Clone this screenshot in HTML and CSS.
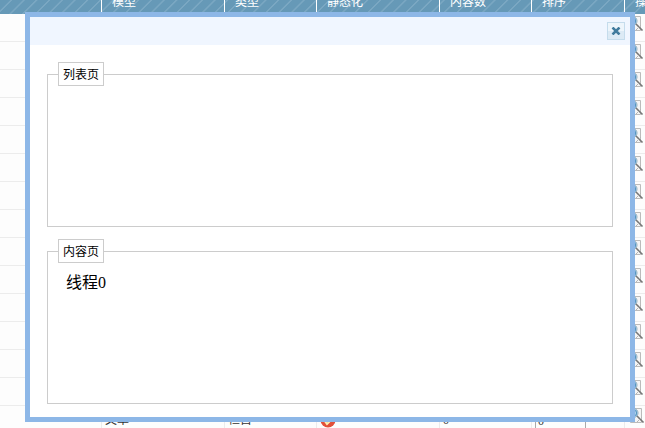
FILE: index.html
```html
<!DOCTYPE html>
<html lang="zh-CN">
<head>
    <meta charset="UTF-8">
    <title>栏目</title>
    <link rel="stylesheet" href="styles.css">
</head>
<body>

<svg width="0" height="0" class="sprite">
    <symbol id="view" viewBox="0 0 16 16">
        <path d="M1.500 1.500h11v14h-11z" fill="#f5f5f5" stroke="#bbb"/>
        <circle cx="4.500" cy="6" r="4.500" fill="#c5e3f5" stroke="#8baabf"/>
        <path d="M6.500 3q2 3 0 6" fill="none" stroke="#5796c2" stroke-width="1.200"/>
        <path d="M8 9l6.500 6.500" stroke="#777" stroke-width="1.600"/>
        <path d="M13 10l-5 5" stroke="#b5b5b5"/>
    </symbol>
</svg>

<div class="list">
    <div class="row list-head">
        <div class="cell"></div>
        <div class="cell">模型</div>
        <div class="cell">类型</div>
        <div class="cell">静态化</div>
        <div class="cell">内容数</div>
        <div class="cell">排序</div>
        <div class="cell">操作</div>
    </div>
    <div class="row"><svg class="view"><use href="#view"/></svg></div>
    <div class="row"><svg class="view"><use href="#view"/></svg></div>
    <div class="row"><svg class="view"><use href="#view"/></svg></div>
    <div class="row"><svg class="view"><use href="#view"/></svg></div>
    <div class="row"><svg class="view"><use href="#view"/></svg></div>
    <div class="row"><svg class="view"><use href="#view"/></svg></div>
    <div class="row"><svg class="view"><use href="#view"/></svg></div>
    <div class="row"><svg class="view"><use href="#view"/></svg></div>
    <div class="row"><svg class="view"><use href="#view"/></svg></div>
    <div class="row"><svg class="view"><use href="#view"/></svg></div>
    <div class="row"><svg class="view"><use href="#view"/></svg></div>
    <div class="row"><svg class="view"><use href="#view"/></svg></div>
    <div class="row"><svg class="view"><use href="#view"/></svg></div>
    <div class="row"><svg class="view"><use href="#view"/></svg></div>
    <div class="row list-row">
        <div class="cell"></div>
        <div class="cell">文章</div>
        <div class="cell">栏目</div>
        <div class="cell">
            <svg class="state" viewBox="0 0 16 16">
                <circle cx="8" cy="8" r="7.500" fill="#e2503a"/>
                <path d="M4 8l3 4 4-4" fill="none" stroke="#fff0b0" stroke-width="2"/>
            </svg>
        </div>
        <div class="cell">0</div>
        <div class="cell"><span class="sort">0</span></div>
        <div class="cell"><svg class="view"><use href="#view"/></svg></div>
    </div>
</div>

<div class="dialog">
    <div class="dialog-head">
        <button class="close">
            <svg width="10" height="8" viewBox="0 0 10 8">
                <path d="M1.500 .5l7 7M8.500 .5l-7 7" stroke="#407b9d" stroke-width="2.500"/>
            </svg>
        </button>
    </div>
    <div class="dialog-body">
        <fieldset class="panel">
            <legend>列表页</legend>
        </fieldset>
        <fieldset class="panel">
            <legend>内容页</legend>
            线程0
        </fieldset>
    </div>
</div>

</body>
</html>
```

FILE: styles.css
```css
body {
    margin: 0;
    height: 428px;
    overflow: hidden;
    position: relative;
    background: #fdfdfd;
    font-family: "Liberation Serif", "Noto Sans CJK SC", sans-serif;
}

.sprite {
    display: block;
}

.list {
    font-size: 12px;
    line-height: 16px;
    color: #333;
}

.row {
    display: flex;
    justify-content: flex-end;
    box-sizing: border-box;
    height: 28px;
    border-bottom: 1px solid #ececec;
}

.list-head,
.list-row {
    display: grid;
    grid-template-columns: 101px 123px 92px 123px 92px 93px 21px;
}

.list-head {
    height: 14px;
    border: 0;
    overflow: hidden;
    align-content: end;
    color: #fff;
    background: repeating-linear-gradient(135deg, #6699b7 0, #6699b7 7px, #7aa7c2 7.500px, #7aa7c2 8.500px, #6699b7 9px);
}

.cell {
    box-sizing: border-box;
    white-space: nowrap;
}

.cell + .cell {
    border-left: 1px solid #ececec;
}

.list-head .cell {
    height: 28px;
    padding: 8px 0 0 10px;
}

.list-head .cell + .cell {
    border-color: #fff;
}

.list-row .cell {
    padding: 6px 0 0 3px;
}

.list-row .cell:last-child {
    padding: 0 0 0 4px;
}

.view {
    display: block;
    width: 16px;
    height: 16px;
    margin: 1px 0 0;
}

.row > .view {
    margin-right: 1px;
}

.state {
    display: block;
    width: 16px;
    height: 16px;
}

.sort {
    display: block;
    width: 47px;
    height: 18px;
    padding-left: 2px;
    border: 1px solid #aaa;
}

.dialog {
    position: absolute;
    top: 12px;
    left: 25px;
    width: 600px;
    height: 400px;
    border: 5px solid #8db7e7;
    background: #fff;
}

.dialog-head {
    display: flex;
    justify-content: flex-end;
    box-sizing: border-box;
    height: 28px;
    padding: 5px;
    background: #f0f6ff;
}

.close {
    display: flex;
    align-items: center;
    justify-content: center;
    width: 18px;
    height: 18px;
    padding: 0;
    border: 1px solid #c5dcec;
    background: linear-gradient(#edf5fb 50%, #dceaf5 50%);
}

.dialog-body {
    display: flex;
    flex-direction: column;
    gap: 12px;
    padding: 17px;
}

.panel {
    box-sizing: border-box;
    height: 165px;
    margin: 0;
    padding: 8px 18px 0;
    border: 1px solid #ccc;
    font-size: 16px;
    line-height: 24px;
}

.panel legend {
    box-sizing: border-box;
    height: 24px;
    margin-left: -8px;
    padding: 1px 4px 0;
    border: 1px solid #ccc;
    font-size: 12px;
    line-height: 22px;
}
```
